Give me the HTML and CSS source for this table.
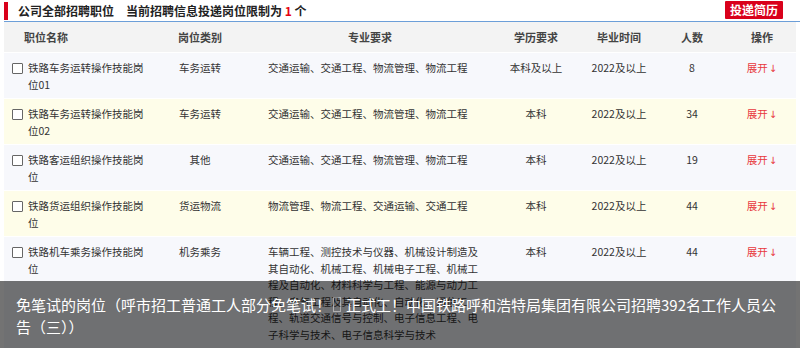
FILE: index.html
```html
<!DOCTYPE html>
<html lang="zh-CN">
<head>
<meta charset="utf-8">
<title>招聘职位</title>
<link rel="stylesheet" href="styles.css">
</head>
<body>
<div class="page">
  <div class="titlebar">
    <div class="title">
      <span class="mark"></span>
      <span class="t1">公司全部招聘职位</span>
      <span class="t2">当前招聘信息投递岗位限制为 <em>1</em> 个</span>
    </div>
    <span class="btn">投递简历</span>
  </div>
  <div class="table">
    <div class="row head">
      <div class="c c1">职位名称</div>
      <div class="c c2">岗位类别</div>
      <div class="c c3 ctr">专业要求</div>
      <div class="c c4">学历要求</div>
      <div class="c c5">毕业时间</div>
      <div class="c c6">人数</div>
      <div class="c c7">操作</div>
    </div>
    <div class="row odd">
      <div class="c c1"><span class="box"></span><span class="nm">铁路车务运转操作技能岗位01</span></div>
      <div class="c c2">车务运转</div>
      <div class="c c3">交通运输、交通工程、物流管理、物流工程</div>
      <div class="c c4">本科及以上</div>
      <div class="c c5">2022及以上</div>
      <div class="c c6">8</div>
      <div class="c c7"><span class="op">展开<span class="arr">↓</span></span></div>
    </div>
    <div class="row even">
      <div class="c c1"><span class="box"></span><span class="nm">铁路车务运转操作技能岗位02</span></div>
      <div class="c c2">车务运转</div>
      <div class="c c3">交通运输、交通工程、物流管理、物流工程</div>
      <div class="c c4">本科</div>
      <div class="c c5">2022及以上</div>
      <div class="c c6">34</div>
      <div class="c c7"><span class="op">展开<span class="arr">↓</span></span></div>
    </div>
    <div class="row odd">
      <div class="c c1"><span class="box"></span><span class="nm">铁路客运组织操作技能岗位</span></div>
      <div class="c c2">其他</div>
      <div class="c c3">交通运输、交通工程、物流管理、物流工程</div>
      <div class="c c4">本科</div>
      <div class="c c5">2022及以上</div>
      <div class="c c6">19</div>
      <div class="c c7"><span class="op">展开<span class="arr">↓</span></span></div>
    </div>
    <div class="row even">
      <div class="c c1"><span class="box"></span><span class="nm">铁路货运组织操作技能岗位</span></div>
      <div class="c c2">货运物流</div>
      <div class="c c3">物流管理、物流工程、交通运输、交通工程</div>
      <div class="c c4">本科</div>
      <div class="c c5">2022及以上</div>
      <div class="c c6">44</div>
      <div class="c c7"><span class="op">展开<span class="arr">↓</span></span></div>
    </div>
    <div class="row odd">
      <div class="c c1"><span class="box"></span><span class="nm">铁路机车乘务操作技能岗位</span></div>
      <div class="c c2">机务乘务</div>
      <div class="c c3">车辆工程、测控技术与仪器、机械设计制造及其自动化、机械工程、机械电子工程、机械工程及自动化、材料科学与工程、能源与动力工程、电气工程及其自动化、自动化、通信工程、轨道交通信号与控制、电子信息工程、电子科学与技术、电子信息科学与技术</div>
      <div class="c c4">本科</div>
      <div class="c c5">2022及以上</div>
      <div class="c c6">44</div>
      <div class="c c7"><span class="op">展开<span class="arr">↓</span></span></div>
    </div>
  </div>
</div>
<div class="caption">免笔试的岗位（呼市招工普通工人部分免笔试！<span class="tofu"></span>正式工！中国铁路呼和浩特局集团有限公司招聘392名工作人员公告（三））</div>
</body>
</html>
```
FILE: styles.css
```css
html, body {
  margin: 0;
  padding: 0;
  background: #fff;
  width: 800px;
  height: 348px;
  overflow: hidden;
  position: relative;
  font-family: "Noto Sans CJK SC", "Noto Sans", sans-serif;
  color: #333;
}
.page {
  padding: 0 0 0 4px;
}
.titlebar {
  height: 22px;
  display: flex;
  align-items: center;
  justify-content: space-between;
  border-bottom: 1.5px solid #6c9ed8;
  box-sizing: border-box;
  padding-right: 17px;
}
.title {
  display: flex;
  align-items: center;
  font-weight: bold;
  font-size: 12px;
  color: #222;
}
.mark {
  width: 4px;
  height: 18px;
  background: #d9001b;
  margin-right: 10px;
}
.t1 { margin-right: 12px; }
.t2 em { font-style: normal; color: #e60012; }
.btn {
  background: #d9001b;
  color: #fff;
  font-weight: bold;
  font-size: 12px;
  height: 18px;
  line-height: 18px;
  padding: 0 5px;
  border-radius: 1px;
  margin-top: -2px;
}
.table {
  width: 792px;
  font-size: 10.5px;
}
.row {
  display: flex;
  border-bottom: 1px solid #fff;
}
.row.head {
  background: #f3f3f3;
  font-weight: bold;
  font-size: 11px;
  height: 30px;
  align-items: center;
  color: #444;
}
.row.odd { background: #f7f8fc; }
.row.even { background: #fefde9; }
.row.odd, .row.even {
  padding: 7px 0 5px;
  line-height: 16.5px;
}
.c { box-sizing: border-box; text-align: center; }
.c1 { width: 146px; text-align: left; display: flex; }
.head .c1 { padding-left: 20px; }
.c2 { width: 100px; }
.c3 { width: 240px; text-align: left; padding: 0 10px 0 18px; }
.head .c3 { text-align: center; padding: 0; }
.c4 { width: 92px; }
.c5 { width: 74px; }
.c6 { width: 72px; }
.c7 { width: 68px; }
.box {
  flex: none;
  width: 9px;
  height: 9px;
  border: 1px solid #666;
  border-radius: 1px;
  margin: 3px 5px 0 8px;
  background: #fff;
}
.nm { width: 118px; }
.op { color: #e8383d; }
.arr {
  font-family: "DejaVu Sans", sans-serif;
  font-size: 10px;
  margin-left: 1px;
}
.caption {
  position: absolute;
  left: 0;
  right: 0;
  bottom: 0;
  height: 67px;
  box-sizing: border-box;
  padding: 13px 16px 0 16px;
  background: rgba(0, 0, 0, 0.55);
  color: #fff;
  font-size: 15px;
  line-height: 22px;
  font-family: "Noto Sans CJK SC", "Noto Sans", sans-serif;
}
.tofu {
  display: inline-block;
  width: 6px;
  height: 13px;
  border: 1px solid rgba(255, 255, 255, 0.45);
  margin: 0 5px 0 2px;
  vertical-align: -1px;
}
```
